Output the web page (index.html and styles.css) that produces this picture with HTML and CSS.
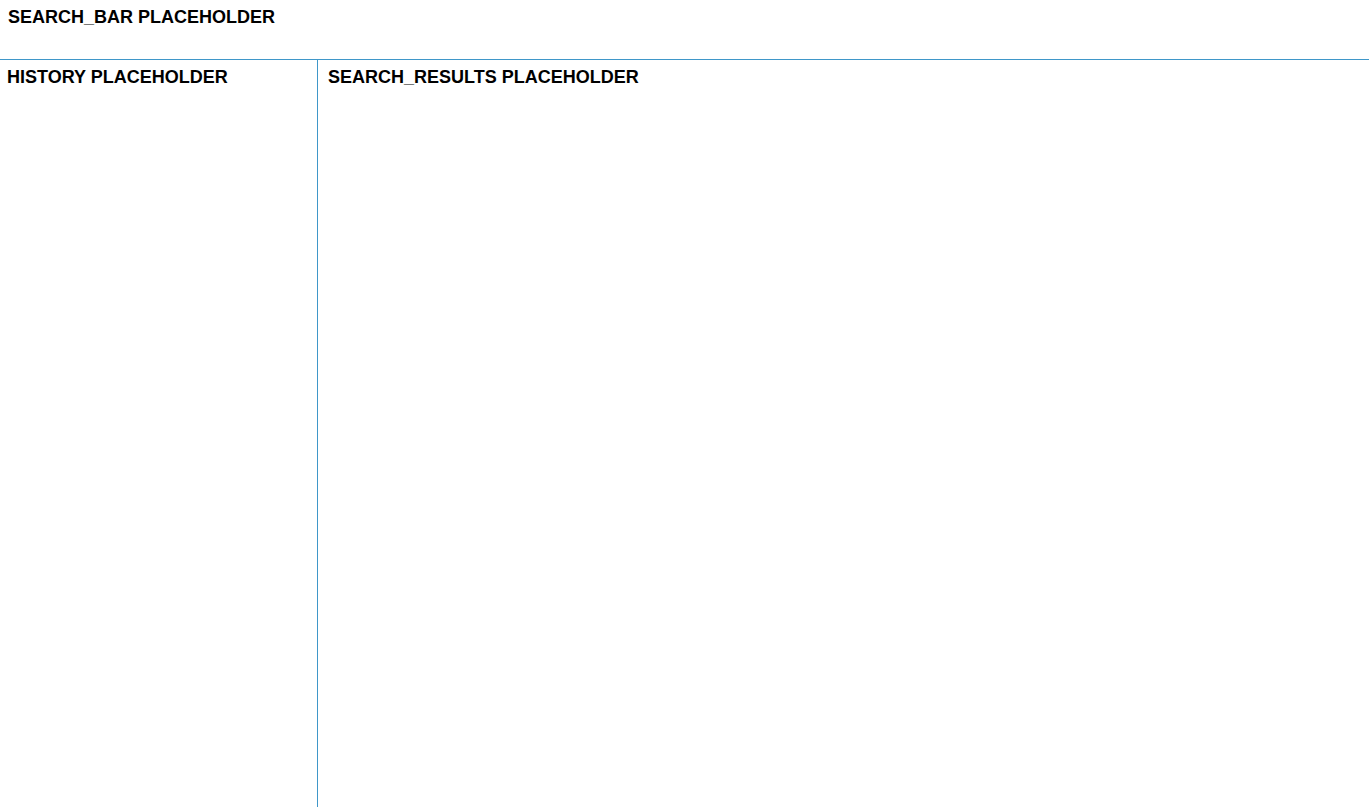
FILE: index.html
```html
<!DOCTYPE html>
<html>
<head>
<meta charset="utf-8">
<link rel="stylesheet" href="styles.css">
</head>
<body>
<div class="app">
  <header class="search-bar">SEARCH_BAR PLACEHOLDER</header>
  <main class="content">
    <aside class="history">HISTORY PLACEHOLDER</aside>
    <section class="results">SEARCH_RESULTS PLACEHOLDER</section>
  </main>
</div>
</body>
</html>
```

FILE: styles.css
```css
html, body {
  margin: 0;
  padding: 0;
  height: 100%;
  background: #ffffff;
}
body {
  font-family: "Liberation Sans", Arial, sans-serif;
  font-size: 18px;
  font-weight: bold;
  color: #000000;
}
.app {
  display: flex;
  flex-direction: column;
  height: 100vh;
}
.search-bar {
  box-sizing: border-box;
  height: 60px;
  padding: 7px 8px;
  border-bottom: 1px solid #3f97c9;
  flex: none;
}
.content {
  display: flex;
  flex: 1;
  min-height: 0;
}
.history {
  box-sizing: border-box;
  width: 318px;
  flex: none;
  padding: 7px 7px;
  border-right: 1px solid #3f97c9;
}
.results {
  flex: 1;
  padding: 7px 10px;
}
```
